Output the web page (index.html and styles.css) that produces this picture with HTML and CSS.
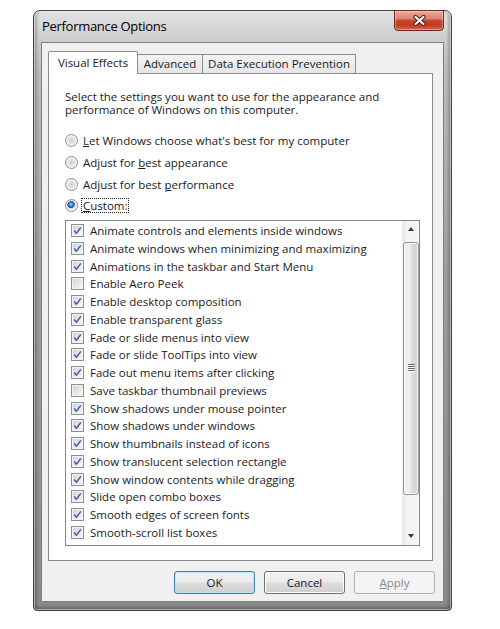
FILE: index.html
```html
<!DOCTYPE html>
<html>
<head>
<meta charset="utf-8">
<title>Performance Options</title>
<link rel="stylesheet" href="styles.css">
</head>
<body>
<div class="window">
  <div class="titlebar">
    <span class="title">Performance Options</span>
    <div class="close">
      <svg width="13" height="11" viewBox="0 0 13 11">
        <path class="x-out" d="M2.5 2 L10.5 9 M10.5 2 L2.5 9"/>
        <path class="x-in" d="M2.5 2 L10.5 9 M10.5 2 L2.5 9"/>
      </svg>
    </div>
  </div>
  <div class="client">
    <div class="tabs">
      <div class="tab sel">Visual Effects</div>
      <div class="tab adv">Advanced</div>
      <div class="tab dep">Data Execution Prevention</div>
    </div>
    <div class="panel">
      <p class="desc"><span class="line">Select the settings you want to use for the appearance and</span><span class="line">performance of Windows on this computer.</span></p>
      <div class="radios">
        <div class="radio"><span class="rb"></span><span class="rl"><u>L</u>et Windows choose what's best for my computer</span></div>
        <div class="radio"><span class="rb"></span><span class="rl">Adjust for <u>b</u>est appearance</span></div>
        <div class="radio"><span class="rb"></span><span class="rl">Adjust for best <u>p</u>erformance</span></div>
        <div class="radio"><span class="rb on"></span><span class="rl focus"><u>C</u>ustom:</span></div>
      </div>
      <div class="listbox">
        <ul class="items">
          <li class="item"><span class="cb"><svg viewBox="0 0 11 11"><path d="M2.2 5.6 4.4 8.2 8.9 2.4"/></svg></span>Animate controls and elements inside windows</li>
          <li class="item"><span class="cb"><svg viewBox="0 0 11 11"><path d="M2.2 5.6 4.4 8.2 8.9 2.4"/></svg></span>Animate windows when minimizing and maximizing</li>
          <li class="item"><span class="cb"><svg viewBox="0 0 11 11"><path d="M2.2 5.6 4.4 8.2 8.9 2.4"/></svg></span>Animations in the taskbar and Start Menu</li>
          <li class="item"><span class="cb"></span>Enable Aero Peek</li>
          <li class="item"><span class="cb"><svg viewBox="0 0 11 11"><path d="M2.2 5.6 4.4 8.2 8.9 2.4"/></svg></span>Enable desktop composition</li>
          <li class="item"><span class="cb"><svg viewBox="0 0 11 11"><path d="M2.2 5.6 4.4 8.2 8.9 2.4"/></svg></span>Enable transparent glass</li>
          <li class="item"><span class="cb"><svg viewBox="0 0 11 11"><path d="M2.2 5.6 4.4 8.2 8.9 2.4"/></svg></span>Fade or slide menus into view</li>
          <li class="item"><span class="cb"><svg viewBox="0 0 11 11"><path d="M2.2 5.6 4.4 8.2 8.9 2.4"/></svg></span>Fade or slide ToolTips into view</li>
          <li class="item"><span class="cb"><svg viewBox="0 0 11 11"><path d="M2.2 5.6 4.4 8.2 8.9 2.4"/></svg></span>Fade out menu items after clicking</li>
          <li class="item"><span class="cb"></span>Save taskbar thumbnail previews</li>
          <li class="item"><span class="cb"><svg viewBox="0 0 11 11"><path d="M2.2 5.6 4.4 8.2 8.9 2.4"/></svg></span>Show shadows under mouse pointer</li>
          <li class="item"><span class="cb"><svg viewBox="0 0 11 11"><path d="M2.2 5.6 4.4 8.2 8.9 2.4"/></svg></span>Show shadows under windows</li>
          <li class="item"><span class="cb"><svg viewBox="0 0 11 11"><path d="M2.2 5.6 4.4 8.2 8.9 2.4"/></svg></span>Show thumbnails instead of icons</li>
          <li class="item"><span class="cb"><svg viewBox="0 0 11 11"><path d="M2.2 5.6 4.4 8.2 8.9 2.4"/></svg></span>Show translucent selection rectangle</li>
          <li class="item"><span class="cb"><svg viewBox="0 0 11 11"><path d="M2.2 5.6 4.4 8.2 8.9 2.4"/></svg></span>Show window contents while dragging</li>
          <li class="item"><span class="cb"><svg viewBox="0 0 11 11"><path d="M2.2 5.6 4.4 8.2 8.9 2.4"/></svg></span>Slide open combo boxes</li>
          <li class="item"><span class="cb"><svg viewBox="0 0 11 11"><path d="M2.2 5.6 4.4 8.2 8.9 2.4"/></svg></span>Smooth edges of screen fonts</li>
          <li class="item"><span class="cb"><svg viewBox="0 0 11 11"><path d="M2.2 5.6 4.4 8.2 8.9 2.4"/></svg></span>Smooth-scroll list boxes</li>
        </ul>
        <div class="scrollbar">
          <div class="sb-btn"><span class="arrow-up"></span></div>
          <div class="sb-track">
            <div class="thumb"><span class="grip"></span></div>
          </div>
          <div class="sb-btn"><span class="arrow-down"></span></div>
        </div>
      </div>
    </div>
    <div class="buttons">
      <div class="btn default">OK</div>
      <div class="btn">Cancel</div>
      <div class="btn disabled"><u>A</u>pply</div>
    </div>
  </div>
</div>
</body>
</html>
```
FILE: styles.css
```css
* { box-sizing: border-box; }
html, body { margin: 0; padding: 0; background: #fff; }
body {
  font-family: "Open Sans", "Noto Sans", sans-serif;
  font-size: 11.5px;
  color: #1a1a1a;
  width: 500px;
  height: 629px;
  overflow: hidden;
}
u { text-decoration-thickness: 1px; text-underline-offset: 1px; }

.window {
  margin: 10px 0 0 33px;
  width: 419px;
  height: 601px;
  border: 1px solid #414141;
  border-radius: 7px 7px 4px 4px;
  background: linear-gradient(180deg, #e2e2e2 0, #d0d0d0 24px, #bdbdbd 60px, #a0a0a0 260px, #8a8a8a 100%);
  box-shadow:
    inset 0 0 0 1px rgba(255,255,255,.45),
    inset 5px 0 3px -2px rgba(0,0,0,.22),
    inset -5px 0 3px -2px rgba(0,0,0,.22),
    inset 0 -5px 3px -2px rgba(0,0,0,.25);
  display: flex;
  flex-direction: column;
}
.titlebar {
  height: 31px;
  flex: none;
  display: flex;
  align-items: flex-start;
  justify-content: space-between;
  padding-left: 8px;
}
.title {
  line-height: 31px;
  font-size: 13px;
  letter-spacing: -0.3px;
  color: #000;
}
.close {
  width: 50px;
  height: 21px;
  margin-top: -1px;
  margin-right: 7px;
  border: 1px solid #6a2a20;
  border-radius: 0 0 4px 4px;
  background: linear-gradient(180deg, #e8a898 0, #dc8470 40%, #c8412a 52%, #c23a22 75%, #d26a52 100%);
  box-shadow: inset 0 0 0 1px rgba(255,255,255,.35);
  display: flex;
  align-items: center;
  justify-content: center;
}
.close svg { display: block; }
.x-out { stroke: #4a1c14; stroke-width: 4.2; fill: none; stroke-linecap: round; }
.x-in { stroke: #fff; stroke-width: 2.2; fill: none; stroke-linecap: round; }

.client {
  flex: 1;
  margin: 0 7px 8px 7px;
  border: 1px solid #7e7e7e;
  background: #f0f0f0;
  padding: 8px 10px 0 6px;
  display: flex;
  flex-direction: column;
}
.tabs {
  display: flex;
  align-items: flex-end;
  height: 22px;
  flex: none;
}
.tab {
  height: 19px;
  border: 1px solid #898c95;
  border-bottom: none;
  background: linear-gradient(180deg, #f3f3f3, #e6e6e6);
  text-align: center;
  line-height: 18px;
  white-space: nowrap;
}
.tab.sel {
  width: 90px;
  height: 23px;
  margin-bottom: -1px;
  background: #fff;
  position: relative;
  z-index: 1;
  line-height: 21px;
  border-radius: 2px 2px 0 0;
}
.tab.adv { width: 66px; margin-left: -1px; }
.tab.dep { width: 154px; margin-left: -1px; }

.panel {
  flex: none;
  width: 385px;
  height: 488px;
  border: 1px solid #898c95;
  background: #fff;
  padding: 16px 0 0 16px;
}
.desc {
  margin: 0;
}
.line {
  display: block;
  height: 13px;
  line-height: 13px;
  white-space: nowrap;
}
.radios { margin-top: 14px; }
.radio {
  height: 21.7px;
  display: flex;
  align-items: center;
}
.rb {
  width: 13px;
  height: 13px;
  flex: none;
  border-radius: 50%;
  border: 1px solid #8e8f8f;
  background: radial-gradient(circle at 50% 50%, #cfd0d1 0, #e2e3e4 3px, #f5f5f5 5.5px);
  box-shadow: inset 0 0 0 1px #f0f0f0;
  margin-right: 5px;
}
.rb.on {
  background: radial-gradient(circle at 45% 40%, #a9dcff 0, #3d84d2 1.8px, #1d4f98 3.4px, #dcdcdc 4px, #f5f5f5 5.5px);
}
.rl { white-space: nowrap; line-height: 13px; }
.rl.focus {
  outline: 1px dotted #222;
  outline-offset: 0;
  padding: 0 1px;
  margin-left: -1px;
}

.listbox {
  margin-top: 3px;
  width: 355px;
  height: 326px;
  border: 1px solid #828790;
  display: flex;
}
.items {
  flex: 1;
  list-style: none;
  margin: 0;
  padding: 1px 0 0 5px;
}
.item {
  height: 17.75px;
  display: flex;
  align-items: center;
  white-space: nowrap;
}
.cb {
  width: 13px;
  height: 13px;
  flex: none;
  margin-right: 6px;
  border: 1px solid #8e8f8f;
  background: linear-gradient(135deg, #cdd1d7 0, #e4e6ea 50%, #f7f7f7 100%);
  box-shadow: inset 0 0 0 1px #f4f4f4;
  display: flex;
  align-items: center;
  justify-content: center;
}
.cb svg { width: 11px; height: 11px; display: block; }
.cb path { fill: none; stroke: #4560a0; stroke-width: 1.5; stroke-linejoin: round; }

.scrollbar {
  width: 17px;
  flex: none;
  display: flex;
  flex-direction: column;
  background: linear-gradient(90deg, #e6e6e6 0, #f3f3f3 25%, #f6f6f6 100%);
  border-left: 1px solid #ececec;
}
.sb-btn {
  height: 17px;
  flex: none;
  display: flex;
  align-items: center;
  justify-content: center;
}
.arrow-up {
  width: 0; height: 0;
  border-left: 3.5px solid transparent;
  border-right: 3.5px solid transparent;
  border-bottom: 4px solid #3a3a3a;
}
.arrow-down {
  width: 0; height: 0;
  border-left: 3.5px solid transparent;
  border-right: 3.5px solid transparent;
  border-top: 4px solid #3a3a3a;
}
.sb-track { flex: 1; }
.thumb {
  margin-top: 4px;
  height: 253px;
  border: 1px solid #979797;
  border-radius: 3px;
  background: linear-gradient(90deg, #f3f3f3 0, #ececec 45%, #dcdcdc 55%, #d2d2d2 100%);
  box-shadow: inset 0 0 0 1px #f8f8f8;
  display: flex;
  align-items: center;
  justify-content: center;
}
.grip {
  width: 7px;
  height: 8px;
  background: repeating-linear-gradient(180deg, #6a6a6a 0 1px, #fbfbfb 1px 2px);
}

.buttons {
  display: flex;
  justify-content: flex-end;
  gap: 9px;
  margin-top: 10px;
  margin-right: -2px;
}
.btn {
  width: 81px;
  height: 23px;
  border: 1px solid #707070;
  border-radius: 3px;
  background: linear-gradient(180deg, #f2f2f2 0, #ebebeb 48%, #dddddd 52%, #cfcfcf 100%);
  box-shadow: inset 0 0 0 1px #fbfbfb;
  text-align: center;
  line-height: 21px;
}
.btn.default {
  border-color: #3c7fb1;
  box-shadow: inset 0 0 0 1px #b8e6fb;
}
.btn.disabled {
  border-color: #adb2b5;
  background: #f4f4f4;
  box-shadow: none;
  color: #8a8a8a;
}
```
